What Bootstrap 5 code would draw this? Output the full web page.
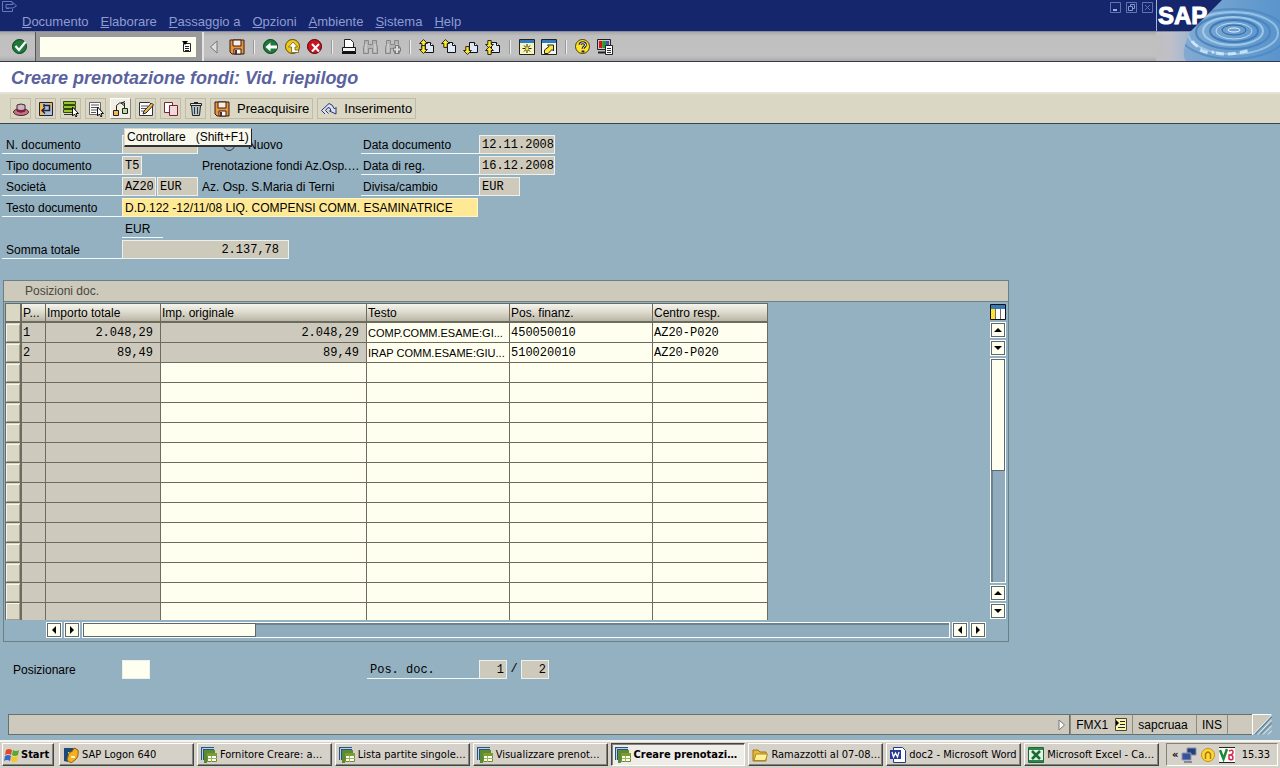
<!DOCTYPE html>
<html lang="it">
<head>
<meta charset="utf-8">
<meta name="viewport" content="width=device-width, initial-scale=1">
<title>Creare prenotazione fondi: Vid. riepilogo</title>
<link href="https://cdn.jsdelivr.net/npm/bootstrap@5.3.0/dist/css/bootstrap.min.css" rel="stylesheet">
<style>
:root { --navy:#15266d; --canvas:#94b1c1; --sand:#dad7c4; --field:#cdc9bb; --cream:#fffff0; --edge:#67706c; --win:#d5d1c9; }
body { font:12px/16px "Liberation Sans",Arial,sans-serif; color:#000; background:var(--canvas); }
button, input { font:inherit; color:inherit; border-radius:0; }
button { padding:0; border:0; background:none; }
svg { display:block; }
.ico { width:16px; height:16px; flex:none; }
.mono { font-family:"Liberation Mono","Courier New",monospace; }

/* window head */
.menu-line { background:var(--navy); height:32px; padding-left:22px; position:relative; border-bottom:1px solid #8a8ca0; }
.menu-line a { color:#8f9dcf; font-size:13px; text-decoration:none; }
.menu-line a::first-letter { text-decoration:underline; }
.menu-list { gap:12px; padding-top:14px; }
.sys-mark { position:absolute; left:2px; top:1px; }
.win-btns { position:absolute; right:3px; top:2px; gap:5px; }
.std-bar { height:30px; background:linear-gradient(#a9a9a9,#bfbfbf 4px,#c1c1c1 24px,#aaa); border-bottom:1px solid #33384a; }
.cmd-zone { background:#9b9b9b; border-left:1px solid #555; border-right:2px solid #e4e4e4; padding:0 6px 0 4px; margin:0 5px 0 7px; width:169px; }
.cmd-box { background:var(--cream); height:20px; }
.cmd-box input { border:0; background:transparent; width:100%; min-width:0; outline:0; padding:0 3px; height:20px; }
.divider { width:2px; height:14px; border-left:1px solid #999; border-right:1px solid #eee; margin:0 2px; }
.brand { width:124px; flex:none; }

.screen-title { font-size:18px; line-height:22px; font-weight:bold; font-style:italic; color:#5a629e; background:#fff; height:32px; padding:5px 11px; margin:0; border-bottom:2px solid #e4e2d6; }
.app-bar { background:var(--sand); border-bottom:1px solid #33454e; height:30px; padding-left:10px; gap:4px; }
.tool { min-width:21px; height:21px; border:1px solid #c0bcab; display:flex; align-items:center; justify-content:center; position:relative; font-size:13px; }
.tool.wide { padding:0 3px; gap:7px; }
.tool.hot { background:#f1efe4; border-color:#fff #8d8a7c #8d8a7c #fff; }
.tip { position:absolute; left:13px; top:29px; z-index:5; background:#f8f8ec; border:1px solid #d8d8cc; border-right:1px solid #222; border-bottom:2px solid #333; white-space:pre; padding:0 2px; line-height:16px; font-size:12px; }

/* form */
.work { padding:11px 0 0 2px; }
.form-grid { display:grid; grid-template-columns:120px 80px 159px 118px 1fr; row-gap:2px; grid-auto-rows:19px; }
.cap { border-bottom:1px solid #f4f8fa; padding:2px 0 0 4px; height:19px; line-height:16px; white-space:nowrap; }
.cap.right { padding-left:2px; }
.note { padding-top:2px; white-space:nowrap; }
.radio-line { gap:13px; padding-left:21px; }
.fld { background:var(--field); border:1px solid #eef0ec; height:19px; padding:0 2px; min-width:0; display:block; }
.fld:focus { outline:1px solid #444; }
.w20 { width:20px; } .w28 { width:28px; } .w34 { width:34px; } .w41 { width:41px; } .w76 { width:76px; padding:0 0 0 2px; } .w167 { width:167px; }
.total { text-align:right; padding-right:9px; }
.hot-fld { grid-column:2 / 5; width:356px; background:#ffe994; border-color:#fff6c8; }
.cream { background:var(--cream); }
.unit { border-bottom:1px solid #f4f8fa; width:41px; padding:2px 3px; }
.radio-new { appearance:none; width:12px; height:12px; border:1px solid #333; border-radius:50%; background:var(--canvas); margin:0; }

/* positions */
.pos-panel { width:78.75%; border:1px solid #6b7f86; margin:21px 0 0 1px; }
.pos-head { background:#cdc9bb; color:#4a473c; height:21px; border-bottom:1px solid #6b7f86; padding:2px 21px; font-size:12px; line-height:17px; }
.pos-body { padding:1px 2px 1px 1px; gap:3px; }
.grid-tab { width:763px; table-layout:fixed; border-collapse:separate; border-spacing:0; }
.grid-tab th { height:20px; padding:0 2px 0 1px; font-weight:normal; line-height:16px; background:linear-gradient(#f6f5ec,#dcd9cc 50%,#b9b6a6); border-right:1px solid #6d6a5e; border-top:1px solid #6d6a5e; border-bottom:2px solid #6d6a5e; white-space:nowrap; }
.grid-tab td { height:20px; padding:0 0 0 1px; line-height:16px; border-right:1px solid #6d6a5e; border-bottom:1px solid #6d6a5e; background:var(--cream); white-space:nowrap; }
.grid-tab td.off { background:#cdcabd; }
.grid-tab td.num { padding-right:7px; text-align:right; }
.grid-tab td.descr { font-size:11px; }
.grid-tab td.pick, .grid-tab th.pick { padding:0; border-left:1px solid #6d6a5e; border-right:2px solid #6d6a5e; background:var(--sand); }
.pick button { display:block; width:100%; height:18px; border:1px solid #f7f6ee; border-right-color:#a19e8f; border-bottom-color:#a19e8f; }
.grid-tab tr:last-child td, .grid-tab tr:last-child .pick button { height:17px; }
.grid-tab tr:last-child td { border-bottom:0; }
.step { width:16px; height:16px; flex:none; background:var(--cream); border:1px solid #fff; outline:0; box-shadow:inset 0 0 0 1px #5b6a70; display:flex; align-items:center; justify-content:center; }
.track { flex:1 1 0; border:1px solid #fff; background:#8fabbc; box-shadow:inset 1px 1px 0 1px #6c8290; }
.thumb { background:var(--cream); border:1px solid #5b6a70; }
.hbar { padding:2px 1px 2px 41px; gap:2px; height:20px; }
.vbar { gap:2px; padding:1px 0 21px; width:16px; flex:none; }

.locate { padding:18px 0 0; display:grid; grid-template-columns:120px 245px 112px auto; justify-content:start; }
.locate .cap { padding-left:3px; }
.locate .plain { padding:2px 0 0 11px; }
.slash { width:14px; text-align:center; padding-top:1px; }

/* status */
.status { margin:0 8px 5px; height:21px; }
.status .msg { background:#cdcabd; border:1px solid var(--edge); padding-right:3px; }
.status .seg { background:#cdcabd; border:1px solid var(--edge); border-left-color:#8a8a7e; border-right:0; padding:2px 5px; gap:7px; }
.status .seg.empty { width:25px; }

/* taskbar */
.taskbar { height:28px; background:var(--win); border-top:2px solid #f6f4ee; padding:1px 2px 0; font:11px/16px "DejaVu Sans Condensed",Tahoma,sans-serif; }
.tb { height:23px; background:var(--win); border:1px solid; border-color:#fff #444 #444 #fff; box-shadow:inset -1px -1px 0 #85827a; display:flex; align-items:center; gap:3px; padding:0 0 0 3px; min-width:0; white-space:nowrap; }
.tb.start { padding:0 1px; gap:1px; width:52px; flex:none; font-weight:bold; }
.tb.task { flex:1 1 0; text-align:left; }
.tb.down { background:#efede8; border-color:#444 #fff #fff #444; box-shadow:inset 1px 1px 0 #85827a; font-weight:bold; }
.tasks { gap:3px; min-width:0; margin:0 7px 0 5px; }
.tray { border:1px solid; border-color:#85827a #fff #fff #85827a; height:23px; padding:0 7px 0 5px; gap:3px; width:112px; flex:none; }
</style>
</head>
<body class="d-flex flex-column min-vh-100">

<svg width="0" height="0" class="position-absolute" aria-hidden="true">
  <defs>
    <linearGradient id="gGray" x1="0" x2="1"><stop offset="0" stop-color="#bfbfbf"/><stop offset=".12" stop-color="#c0bfca"/><stop offset=".35" stop-color="#8fb2d2"/><stop offset="1" stop-color="#3f86c4"/></linearGradient>
    <symbol id="disk" viewBox="0 0 16 16"><path d="M1 1h14v14H3l-2-2z" fill="#e8963c" stroke="#3a1a10"/><path d="M4 1h8v6H4z" fill="#f8ede0" stroke="#3a1a10"/><path d="M5 10h7v5H5z" fill="#fff" stroke="#3a1a10"/><path d="M6 11h2v4H6z" fill="#5a2a20"/></symbol>
    <symbol id="sheet" viewBox="0 0 16 16"><path d="M6.500 3.500h5l3 3v7h-8z" fill="#dfe8f8" stroke="#111"/><path d="M11.500 3.500v3h3" fill="#fff" stroke="#111"/></symbol>
    <symbol id="sapwin" viewBox="0 0 16 16"><path d="M0 0h13v3H3v10H0z" fill="#26547c"/><path d="M3 3h11v3H6v10H3z" fill="#5c8a34"/><path d="M1.500 13V1.500H13" fill="none" stroke="#b8d4e4"/><path d="M6.500 6.500h9v8h-9z" fill="#fff" stroke="#6b8e2c"/><path d="M6 6h10v3H6z" fill="#7c9c2e"/><path d="M10.500 9v6M7 11.500h9" stroke="#9ab84e"/></symbol>
    <symbol id="up" viewBox="0 0 8 8"><path d="M0 6l4-4 4 4z"/></symbol>
    <symbol id="down" viewBox="0 0 8 8"><path d="M0 2l4 4 4-4z"/></symbol>
    <symbol id="left" viewBox="0 0 8 8"><path d="M6 0L2 4l4 4z"/></symbol>
    <symbol id="right" viewBox="0 0 8 8"><path d="M2 0l4 4-4 4z"/></symbol>
    <symbol id="bino" viewBox="0 0 16 16"><path d="M1.500 1.500h4v4h4v-4h4v4l1 3v6h-5v-5h-4v5h-5v-6l1-3z" fill="#b4b4b4" stroke="#878787"/><path d="M3 5v8M12 5v8" stroke="#ddd"/></symbol>
    <symbol id="yup" viewBox="0 0 8 8"><path d="M4 .5L7.500 4H5.500v3.500h-3V4h-2z" fill="#ffe92e" stroke="#111" stroke-width=".8"/></symbol>
    <symbol id="ydn" viewBox="0 0 8 8"><path d="M4 7.500L.5 4h2V.5h3V4h2z" fill="#ffe92e" stroke="#111" stroke-width=".8"/></symbol>
  </defs>
</svg>

<header class="d-flex">
  <div class="flex-grow-1">
    <div class="menu-line">
      <svg class="sys-mark" width="16" height="12" viewBox="0 0 16 12" fill="none" stroke="#6578b8"><path d="M10 2.500V.5H.5v10h10V8M4 3.500h7V1.500l3.500 3.500-3.500 2H4zM4 7.500h3"/></svg>
      <nav class="menu-list d-flex" aria-label="Menu">
        <a href="#">Documento</a><a href="#">Elaborare</a><a href="#">Passaggio a</a><a href="#">Opzioni</a><a href="#">Ambiente</a><a href="#">Sistema</a><a href="#">Help</a>
      </nav>
      <div class="win-btns d-flex">
        <button aria-label="Riduci"><svg width="11" height="11" fill="none" stroke="#6074b4"><path d="M.5.5h10v10H.5z"/><path d="M3 8h4" stroke="#9aabda" stroke-width="2"/></svg></button>
        <button aria-label="Ripristina"><svg width="11" height="11" fill="none" stroke="#6074b4"><path d="M.5.5h10v10H.5z"/><path d="M4.500 4V2.500h4v4H7M2.500 4.500h4v4h-4z" stroke="#8496cc"/></svg></button>
        <button aria-label="Chiudi"><svg width="11" height="11" fill="none" stroke="#6074b4"><path d="M.5.5h10v10H.5zM3 3l5 5M8 3L3 8"/></svg></button>
      </div>
    </div>
    <div class="std-bar d-flex align-items-stretch">
      <button aria-label="Invio" class="d-flex align-items-center ms-2 ps-1"><svg class="ico" viewBox="0 0 16 16"><circle cx="7.500" cy="7.500" r="7" fill="#1e7a3a" stroke="#0c3a1c"/><path d="M3.500 7l3.500 4 6.500-8" fill="none" stroke="#fff" stroke-width="2.200"/></svg></button>
      <div class="cmd-zone d-flex align-items-center">
        <div class="cmd-box d-flex align-items-center flex-grow-1 pe-1">
          <input type="text" aria-label="Campo comandi">
          <button aria-label="Elenco comandi"><svg width="10" height="12" viewBox="0 0 10 12"><path d="M1.500 2.500h7v8h-7z" fill="#fff" stroke="#222"/><path d="M3 5.500h4M3 7.500h4M3 9.500h4" stroke="#222"/><path d="M0 0h6L3 4z"/></svg></button>
        </div>
      </div>
      <div class="d-flex align-items-center" style="gap:6px">
        <button aria-label="Chiudi campo"><svg width="10" height="14" viewBox="0 0 10 14"><path d="M8 1L1.500 7 8 13z" fill="#ddd" stroke="#777"/></svg></button>
        <button aria-label="Salvare" class="ms-1"><svg class="ico"><use href="#disk"/></svg></button>
        <span class="divider"></span>
        <button aria-label="Indietro"><svg class="ico" viewBox="0 0 16 16"><circle cx="7.500" cy="7.500" r="7" fill="#1e7a3a" stroke="#0c3a1c"/><path d="M2.500 8l5-4.500v3H14v3H7.500v3z" fill="#fff"/></svg></button>
        <button aria-label="Terminare"><svg class="ico" viewBox="0 0 16 16"><circle cx="7.500" cy="7.500" r="7" fill="#f0c818" stroke="#5c4a08"/><path d="M8 3l4.500 5H10v3h3.500v2.500H6.500V8H3.500z" fill="#fff" stroke="#5c4a08" stroke-width=".7"/></svg></button>
        <button aria-label="Interrompere"><svg class="ico" viewBox="0 0 16 16"><circle cx="7.500" cy="7.500" r="7" fill="#cc1420" stroke="#500"/><path d="M5 5l7 7.500M12 5l-7 7.500" stroke="#fff" stroke-width="2"/></svg></button>
        <span class="divider"></span>
        <button aria-label="Stampare"><svg class="ico" viewBox="0 0 16 16"><path d="M3.500 8V.5h6l3 3V8" fill="#fff" stroke="#222"/><path d="M1.500 8.500h13v4h-13z" fill="#f4f4f4" stroke="#111"/><path d="M1 14h14" stroke="#111" stroke-width="2"/></svg></button>
        <button aria-label="Cercare"><svg class="ico"><use href="#bino"/></svg></button>
        <button aria-label="Cercare ancora"><svg class="ico" viewBox="0 0 16 16"><use href="#bino"/><path d="M12 6v9M8 10.500h8" stroke="#777" stroke-width="4"/><path d="M12 7v7M9 10.500h6" stroke="#ddd" stroke-width="2"/></svg></button>
        <span class="divider"></span>
        <button aria-label="Prima pagina"><svg class="ico" viewBox="0 0 16 16"><use href="#sheet"/><use href="#yup" width="9" height="9"/><use href="#ydn" y="6" width="9" height="9"/></svg></button>
        <button aria-label="Pagina precedente"><svg class="ico" viewBox="0 0 16 16"><use href="#sheet"/><use href="#yup" width="9" height="9"/></svg></button>
        <button aria-label="Pagina successiva"><svg class="ico" viewBox="0 0 16 16"><use href="#sheet"/><use href="#ydn" y="7" width="9" height="9"/></svg></button>
        <button aria-label="Ultima pagina"><svg class="ico" viewBox="0 0 16 16"><use href="#sheet"/><use href="#ydn" y="1" width="9" height="9"/><use href="#yup" y="7" width="9" height="9"/></svg></button>
        <span class="divider"></span>
        <button aria-label="Nuovo modo"><svg class="ico" viewBox="0 0 16 16"><path d="M.5.5h15v15H.5z" fill="#f8f5b8" stroke="#222"/><path d="M1 1h14v3H1z" fill="#2f7cc0"/><path d="M8 5v9M3.500 9.500h9M5 6.500l6 6M11 6.500l-6 6" stroke="#222"/><circle cx="8" cy="9.500" r="1.500" fill="#ffe92e"/></svg></button>
        <button aria-label="Collegamento"><svg class="ico" viewBox="0 0 16 16"><path d="M.5.5h15v15H.5z" fill="#f4f6f0" stroke="#222"/><path d="M1 1h14v3H1z" fill="#2f7cc0"/><path d="M3.500 14.500V11L8 7.500 6.500 6h6v6L11 10.500l-4 4z" fill="#ffe92e" stroke="#222"/></svg></button>
        <span class="divider"></span>
        <button aria-label="Guida"><svg class="ico" viewBox="0 0 16 16"><circle cx="7.500" cy="7.500" r="7" fill="#ffe22e" stroke="#4a3c08"/><path d="M5 6c0-3 5.500-3 5.500 0 0 2-2.500 1.500-2.500 4M8 11.500v2" fill="none" stroke="#222" stroke-width="2.800"/><path d="M5 6c0-3 5.500-3 5.500 0 0 2-2.500 1.500-2.500 4" fill="none" stroke="#fff"/></svg></button>
        <button aria-label="Layout"><svg class="ico" viewBox="0 0 16 16"><path d="M.5.5h13v10H.5z" fill="#c8c8c8" stroke="#222"/><path d="M2 2h3.500v7H2z" fill="#d01818"/><path d="M5.500 2H9v7H5.500z" fill="#18a030"/><path d="M9 2h3v7H9z" fill="#4050c0"/><path d="M1 13.500h7" stroke="#222" stroke-width="2"/><path d="M8.500 6.500h7v9h-7z" fill="#fff" stroke="#222"/><path d="M10 9.500h4M10 11.500h4M10 13.500h4" stroke="#333"/></svg></button>
      </div>
    </div>
  </div>
  <svg class="brand" width="124" height="62" viewBox="0 0 124 62">
    <defs><clipPath id="pond"><path d="M66 0H124V61H30Q24 54 34 32z"/></clipPath></defs>
    <path d="M0 0h124v62H0z" fill="url(#gGray)"/>
    <g clip-path="url(#pond)">
      <path d="M0 0h124v62H0z" fill="#6c9fd0" opacity=".6"/>
      <g fill="none" stroke="#b8dcf4">
        <ellipse cx="78" cy="30" rx="6" ry="2" stroke="#e4f4ff"/><ellipse cx="78" cy="30" rx="12" ry="5" stroke="#2a649e"/><ellipse cx="78" cy="31" rx="18" ry="8"/><ellipse cx="78" cy="31" rx="24" ry="11" stroke="#3f7cba" stroke-width="2"/><ellipse cx="77" cy="31" rx="30" ry="14" stroke-width="2" opacity=".7"/><ellipse cx="77" cy="32" rx="37" ry="17" stroke="#4a86c0" stroke-width="2"/><ellipse cx="77" cy="33" rx="45" ry="21" opacity=".6" stroke-width="2"/><ellipse cx="77" cy="34" rx="53" ry="25" stroke="#4a86c0" stroke-width="2" opacity=".7"/>
      </g>
      <path d="M44 50q8 4 14 2M60 53q14 3 34-3M36 41q3 5 10 7" stroke="#d6f0ff" stroke-width="3" fill="none" stroke-dasharray="8 4" opacity=".8"/>
    </g>
    <path d="M0 0h66L35 31H0z" fill="#15266d"/><path d="M0 31.500h34" stroke="#8a8ca0"/><path d="M.5 0v31" stroke="#aab2d4"/>
    <text x="2" y="24" font-family="Liberation Sans, Arial, sans-serif" font-size="24" font-weight="bold" fill="#fff" stroke="#fff">SAP</text>
    <path d="M0 61.500h124" stroke="#33384a"/>
  </svg>
</header>

<h1 class="screen-title">Creare prenotazione fondi: Vid. riepilogo</h1>

<div class="app-bar d-flex align-items-center" role="toolbar" aria-label="Funzioni">
  <button class="tool" aria-label="Testata"><svg class="ico" viewBox="0 0 16 16"><ellipse cx="8" cy="11" rx="7.500" ry="3.500" fill="#c87088" stroke="#4a2430"/><path d="M4 10V4q4-2 8 0v6q-4 2-8 0z" fill="#c8b8c4" stroke="#4a2430"/><path d="M4 8q4 2 8 0v2.500q-4 2-8 0z" fill="#801c38"/></svg></button>
  <button class="tool" aria-label="Altro documento"><svg class="ico" viewBox="0 0 16 16"><path d="M1.500 1.500h13v13h-13z" fill="#aebede" stroke="#222"/><path d="M2 2h2.500v4H6v6H4.500v2H2zM11 2h3v4h-3z" fill="#f5b850"/><path d="M4 9.500h7.500v-5H6M7 6.500l-3 3 3 3M6 3v3" fill="none" stroke="#223" stroke-width="1.500"/></svg></button>
  <button class="tool" aria-label="Selezionare tutto"><svg class="ico" viewBox="0 0 16 16"><path d="M.5.5h12v3H.5zM.5 4.500h12v3H.5zM.5 8.500h12v3H.5z" fill="#9cc42c" stroke="#2e4a10"/><path d="M1 13.500h8" stroke="#333"/><path d="M9.500 6v9l2-2 1.500 3 1-1-1-2.500h2.500z" fill="#fff" stroke="#111"/></svg></button>
  <button class="tool" aria-label="Deselezionare"><svg class="ico" viewBox="0 0 16 16"><path d="M1.500 1.500h11v12h-11z" fill="#fff" stroke="#666"/><path d="M3 4h8M3 6.500h8M3 9h8M3 11.500h5" stroke="#555"/><path d="M9.500 6v9l2-2 1.500 3 1-1-1-2.500h2.500z" fill="#fff" stroke="#111"/></svg></button>
  <button class="tool hot" aria-label="Controllare"><svg class="ico" viewBox="0 0 16 16"><path d="M3.500 9V4.500l3-2.500h5v5" fill="none" stroke="#222"/><path d="M8 2l4-1.500M8 2l3 2.500" fill="none" stroke="#222"/><path d="M.5 9.500h5v5h-5z" fill="#f5b850" stroke="#222"/><path d="M9.500 7.500h5v5h-5z" fill="#b8dca0" stroke="#222"/></svg><span class="tip" role="tooltip">Controllare   (Shift+F1)</span></button>
  <button class="tool" aria-label="Modificare"><svg class="ico" viewBox="0 0 16 16"><path d="M1.500 1.500h10l3 3v10h-13z" fill="#fff" stroke="#333"/><path d="M3 5h7M3 7.500h5M3 10h3" stroke="#556"/><path d="M5 13l1-3 7.500-8 2 2L8 12z" fill="#f5b850" stroke="#222"/></svg></button>
  <button class="tool" aria-label="Copiare"><svg class="ico" viewBox="0 0 16 16"><path d="M1.500 1.500h8v10h-8z" fill="#fff" stroke="#7a2430"/><path d="M6.500 4.500h8v10h-8z" fill="#f0d8dc" stroke="#7a2430"/></svg></button>
  <button class="tool" aria-label="Cancellare"><svg class="ico" viewBox="0 0 16 16"><path d="M3.500 4.500h9l-1 10h-7z" fill="#b4c4cc" stroke="#222"/><path d="M6.500 6v7M9.500 6v7" stroke="#333"/><path d="M2.500 2.500h11v2h-11zM6 1.500h4" fill="#d8e0e4" stroke="#222"/></svg></button>
  <button class="tool wide"><svg class="ico"><use href="#disk"/></svg>Preacquisire</button>
  <button class="tool wide"><svg class="ico" viewBox="0 0 16 16"><path d="M7.500 12.500l-3-3L7 6.500q2-.5 3 3l-1.500.5 6.500 3V6.500L13.500 8Q11.500 3 8 2.500L.5 9.500l3.500 3.500" fill="#d8e0f4" stroke="#28346c"/></svg>Inserimento</button>
</div>

<main class="work flex-grow-1">
  <form class="form-grid" onsubmit="return false">
    <label class="cap" for="ndoc">N. documento</label>
    <input class="fld mono w76" id="ndoc" readonly>
    <label class="radio-line d-flex align-items-center"><input type="radio" class="radio-new">Nuovo</label>
    <label class="cap right" for="ddoc">Data documento</label>
    <input class="fld mono w76" id="ddoc" value="12.11.2008">

    <label class="cap" for="tdoc">Tipo documento</label>
    <input class="fld mono w20" id="tdoc" value="T5">
    <div class="note">Prenotazione fondi Az.Osp.…</div>
    <label class="cap right" for="dreg">Data di reg.</label>
    <input class="fld mono w76" id="dreg" value="16.12.2008">

    <label class="cap" for="soc">Società</label>
    <div class="d-flex" style="gap:1px"><input class="fld mono w34" id="soc" value="AZ20"><input class="fld mono w41" value="EUR" aria-label="Divisa società"></div>
    <div class="note">Az. Osp. S.Maria di Terni</div>
    <label class="cap right" for="div">Divisa/cambio</label>
    <input class="fld mono w41" id="div" value="EUR">

    <label class="cap" for="txt">Testo documento</label>
    <input class="fld hot-fld" id="txt" value="D.D.122 -12/11/08 LIQ. COMPENSI COMM. ESAMINATRICE">
    <span></span>

    <span></span><div class="unit">EUR</div><span></span><span></span><span></span>

    <label class="cap" for="tot">Somma totale</label>
    <input class="fld mono w167 total" id="tot" value="2.137,78">
  </form>

  <section class="pos-panel" aria-label="Posizioni documento">
    <div class="pos-head">Posizioni doc.</div>
    <div class="pos-body d-flex">
      <div class="flex-grow-1">
        <table class="grid-tab">
          <colgroup><col style="width:17px"><col style="width:24px"><col style="width:115px"><col style="width:206px"><col style="width:143px"><col style="width:143px"><col style="width:115px"></colgroup>
          <thead><tr><th class="pick"></th><th>P...</th><th>Importo totale</th><th>Imp. originale</th><th>Testo</th><th>Pos. finanz.</th><th>Centro resp.</th></tr></thead>
          <tbody id="rows">
            <tr><td class="pick"><button aria-label="Riga 1"></button></td><td class="off mono">1</td><td class="off mono num">2.048,29</td><td class="off mono num">2.048,29</td><td class="descr">COMP.COMM.ESAME:GI...</td><td class="mono">450050010</td><td class="mono">AZ20-P020</td></tr>
            <tr><td class="pick"><button aria-label="Riga 2"></button></td><td class="off mono">2</td><td class="off mono num">89,49</td><td class="off mono num">89,49</td><td class="descr">IRAP COMM.ESAME:GIU...</td><td class="mono">510020010</td><td class="mono">AZ20-P020</td></tr>
          </tbody>
        </table>
        <div class="hbar d-flex">
          <button class="step" aria-label="Inizio"><svg width="8" height="8"><use href="#left"/></svg></button>
          <button class="step" aria-label="Destra"><svg width="8" height="8"><use href="#right"/></svg></button>
          <div class="track d-flex"><div class="thumb" style="width:20%"></div></div>
          <button class="step" aria-label="Sinistra"><svg width="8" height="8"><use href="#left"/></svg></button>
          <button class="step" aria-label="Fine"><svg width="8" height="8"><use href="#right"/></svg></button>
        </div>
      </div>
      <div class="vbar d-flex flex-column">
        <button aria-label="Configurazione"><svg class="ico" viewBox="0 0 16 16"><path d="M.5.5h15v15H.5z" fill="#fff" stroke="#111"/><path d="M1 1h14v4H1z" fill="#2f7cc0"/><path d="M1 5h4v10H1z" fill="#ffe22e"/><path d="M5.500 2v13M10.500 2v13" stroke="#667"/></svg></button>
        <button class="step" aria-label="Prima riga"><svg width="8" height="8"><use href="#up"/></svg></button>
        <button class="step" aria-label="Giù"><svg width="8" height="8"><use href="#down"/></svg></button>
        <div class="track"><div class="thumb" style="height:50%"></div></div>
        <button class="step" aria-label="Su"><svg width="8" height="8"><use href="#up"/></svg></button>
        <button class="step" aria-label="Ultima riga"><svg width="8" height="8"><use href="#down"/></svg></button>
      </div>
    </div>
  </section>

  <div class="locate">
    <label class="plain" for="posiz">Posizionare</label>
    <input class="fld mono w28 cream" id="posiz">
    <label class="cap mono" for="cur">Pos. doc.</label>
    <div class="d-flex"><input class="fld mono w28 text-end" id="cur" value="1"><span class="mono slash">/</span><input class="fld mono w28 text-end" value="2" aria-label="Totale posizioni"></div>
  </div>
</main>

<footer>
  <div class="status d-flex">
    <div class="msg flex-grow-1 d-flex align-items-center justify-content-end"><svg width="8" height="12" viewBox="0 0 8 12"><path d="M1 1l5.500 5L1 11z" fill="#fff" stroke="#777"/></svg></div>
    <div class="seg d-flex">FMX1 <button aria-label="Informazioni"><svg width="12" height="13" viewBox="0 0 12 13"><path d="M.5.5h11v12H.5z" fill="#f8f4a8" stroke="#444"/><path d="M1 2v6l3-3z"/><path d="M5 3.500h5M5 6.500h5M3 9.500h7" stroke="#222"/></svg></button></div>
    <div class="seg">sapcruaa&nbsp;</div><div class="seg">INS</div><div class="seg empty"></div>
    <svg width="20" height="21"><path d="M0 0h20L0 21z" fill="#cdcabd"/><path d="M.5 21V.5H19" fill="none" stroke="#fff"/><path d="M1 20.500L20 .5M6 20.500l14-15M11 20.500l9-9M16 20.500l4-4" stroke="#eef3f5" fill="none"/><path d="M3 20.500l17-18M8 20.500l12-12" stroke="#5b7482"/></svg>
  </div>
  <div class="taskbar d-flex">
    <button class="tb start"><svg class="ico" viewBox="0 0 16 16"><path d="M2 3q3-2 6 0L7 8Q4 6 1 8z" fill="#e04a20"/><path d="M9 3q3 2 6 0l-1 5q-3 2-6 0z" fill="#58a830"/><path d="M1 9q3-2 6 0l-1 5q-3-2-6 0z" fill="#3a68c8"/><path d="M8 9q3 2 6 0l-1 5q-3 2-6 0z" fill="#f4c81c"/></svg>Start</button>
    <div class="tasks d-flex flex-grow-1">
      <button class="tb task"><svg class="ico" viewBox="0 0 16 16"><path d="M1 1h12v4H5v10L1 14z" fill="#1c4a78"/><path d="M6 6q4-1 5-5l4 2q1 7-3 10l-4 3-4-3z" fill="#f4b020" stroke="#9a5c10"/><path d="M8 10h4" stroke="#fff4b0" stroke-width="2"/></svg><span>SAP Logon 640</span></button>
      <button class="tb task"><svg class="ico"><use href="#sapwin"/></svg><span>Fornitore Creare: a…</span></button>
      <button class="tb task"><svg class="ico"><use href="#sapwin"/></svg><span>Lista partite singole…</span></button>
      <button class="tb task"><svg class="ico"><use href="#sapwin"/></svg><span>Visualizzare prenot…</span></button>
      <button class="tb task down"><svg class="ico"><use href="#sapwin"/></svg><span>Creare prenotazi…</span></button>
      <button class="tb task"><svg class="ico" viewBox="0 0 16 16"><path d="M1 3h5l2 2h6v9H1z" fill="#e8b838" stroke="#9a7418"/><path d="M2 13.500L4 7h11.500l-2 6.500z" fill="#fff09a" stroke="#b08820"/></svg><span>Ramazzotti al 07-08…</span></button>
      <button class="tb task"><svg class="ico" viewBox="0 0 16 16"><path d="M3.500.5h9l3 3v12h-12z" fill="#fff" stroke="#223a8c"/><path d="M0 3h11v9H0z" fill="#233a98"/><path d="M2 5l1.500 5L5.500 6l2 4L9 5" fill="none" stroke="#fff" stroke-width="1.300"/></svg><span>doc2 - Microsoft Word</span></button>
      <button class="tb task"><svg class="ico" viewBox="0 0 16 16"><path d="M.5.5h15v15H.5z" fill="#e4f4e4" stroke="#1a6a34"/><path d="M1 1h14v2H1zM1 13h14v2H1z" fill="#2c8848"/><path d="M4 4l8 8M12 4l-8 8" stroke="#1a6a34" stroke-width="2.500"/></svg><span>Microsoft Excel - Ca…</span></button>
    </div>
    <div class="tray d-flex align-items-center">
      <span class="fw-bold">«</span>
      <svg class="ico" viewBox="0 0 16 16"><path d="M6 1h9v7H6z" fill="#24407c" stroke="#8890a8"/><path d="M1 6h9v7H1z" fill="#3454a0" stroke="#99a"/><path d="M3 15h8" stroke="#889" stroke-width="2"/></svg>
      <svg class="ico" viewBox="0 0 16 16"><circle cx="8" cy="8" r="6.500" fill="#fcd838" stroke="#c89010"/><path d="M5.500 12V7q2.500-4 5 0v5" fill="none" stroke="#b07808" stroke-width="1.500"/></svg>
      <svg class="ico" viewBox="0 0 16 16"><path d="M0 0h16v16H0z" fill="#fff"/><path d="M1 3l3.500 9L8 2" fill="none" stroke="#1c8a34" stroke-width="2.500"/><path d="M10 4q4-2 4 1t-4 3v4q4 2 4-1t-3-3" fill="none" stroke="#d8284c" stroke-width="1.500"/><path d="M0 15.500h16M0 .5h16" stroke="#222"/></svg>
      <span class="ms-auto">15.33</span>
    </div>
  </div>
</footer>

<script src="https://cdn.jsdelivr.net/npm/bootstrap@5.3.0/dist/js/bootstrap.bundle.min.js"></script>
<script>
  // Fill the table control with empty, selectable rows
  const body = document.getElementById('rows');
  for (let n = 3; n <= 15; n++) {
    body.insertAdjacentHTML('beforeend',
      `<tr><td class="pick"><button aria-label="Riga ${n}"></button></td><td class="off"></td><td class="off"></td><td></td><td></td><td></td><td></td></tr>`);
  }
</script>
</body>
</html>
